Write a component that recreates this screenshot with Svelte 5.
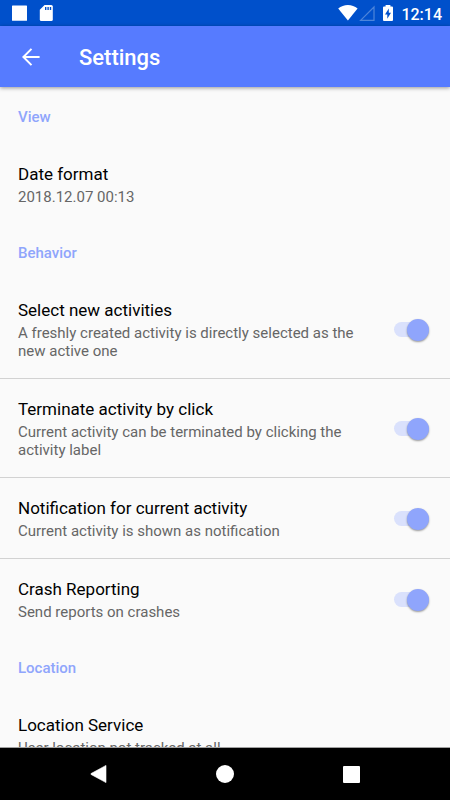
<script lang="ts">
	interface Item {
		id: string;
		title: string;
		summary: string;
		checked?: boolean;
	}

	interface Section {
		name: string;
		items: Item[];
	}

	let sections = $state<Section[]>([
		{
			name: "View",
			items: [
				{ id: "date-format", title: "Date format", summary: "2018.12.07 00:13" },
			],
		},
		{
			name: "Behavior",
			items: [
				{
					id: "select-new",
					title: "Select new activities",
					summary: "A freshly created activity is directly selected as the new active one",
					checked: true,
				},
				{
					id: "terminate",
					title: "Terminate activity by click",
					summary: "Current activity can be terminated by clicking the activity label",
					checked: true,
				},
				{
					id: "notification",
					title: "Notification for current activity",
					summary: "Current activity is shown as notification",
					checked: true,
				},
				{
					id: "crash",
					title: "Crash Reporting",
					summary: "Send reports on crashes",
					checked: true,
				},
			],
		},
		{
			name: "Location",
			items: [
				{
					id: "location-service",
					title: "Location Service",
					summary: "User location not tracked at all",
				},
			],
		},
	]);
</script>

{#snippet texts(item: Item)}
	<span class="texts">
		<span class="title">{item.title}</span>
		<span class="summary">{item.summary}</span>
	</span>
{/snippet}

<div class="screen">
	<div class="status">
		<svg width="42" height="18" viewBox="0 0 42 18" aria-hidden="true">
			<rect x="0" y="1.4" width="15" height="15.4" rx="0.6" fill="#fff" />
			<path
				d="M32.6 1H39.3Q40.8 1 40.8 2.5V15.5Q40.8 17 39.3 17H29.3Q27.8 17 27.8 15.5V5.8Z"
				fill="#fff"
			/>
			<path d="M33 3h1.4v3H33zM35.4 3h1.4v3h-1.4zM37.8 3h1.4v3h-1.4z" fill="#0050cb" />
		</svg>
		<div class="status-right">
			<svg width="56" height="18" viewBox="0 0 56 18" aria-hidden="true">
				<path d="M0.2 4.6Q4.4 1 9.9 1T19.6 4.6L9.9 16.6Z" fill="#fff" />
				<path d="M36 3V16.4H22.6Z" fill="none" stroke="#4d85da" stroke-width="1.2" />
				<path
					d="M47.6 2.4V1H52.4V2.4H54Q55 2.4 55 3.4V16Q55 17 54 17H46Q45 17 45 16V3.4Q45 2.4 46 2.4Z"
					fill="#fff"
				/>
				<path d="M50.8 4.6V8.8H53L49.3 14.8V10.5H47Z" fill="#0050cb" />
			</svg>
			<span class="clock">12:14</span>
		</div>
	</div>

	<header class="toolbar">
		<button class="back" aria-label="Navigate up">
			<svg width="18" height="18" viewBox="0 0 18 18" aria-hidden="true">
				<path d="M17.6 9H1.6M9.5 0.9L1.4 9L9.5 17.1" fill="none" stroke="#fff" stroke-width="2" />
			</svg>
		</button>
		<h1>Settings</h1>
	</header>

	<main class="list">
		{#each sections as section}
			<section>
				<h2>{section.name}</h2>
				{#each section.items as item (item.id)}
					{#if item.checked === undefined}
						<button class="row">{@render texts(item)}</button>
					{:else}
						<label class="row" for={item.id}>
							{@render texts(item)}
							<input id={item.id} class="switch" type="checkbox" role="switch" bind:checked={item.checked} />
						</label>
					{/if}
				{/each}
			</section>
		{/each}
	</main>

	<nav class="navbar">
		<button aria-label="Back">
			<svg width="18" height="20" viewBox="0 0 18 20" aria-hidden="true">
				<path d="M16 1.4V18.6L1 10.4Q0.4 10 1 9.6Z" fill="#fff" stroke="#fff" stroke-width="0.6" stroke-linejoin="round" />
			</svg>
		</button>
		<button aria-label="Home">
			<svg width="18" height="18" viewBox="0 0 18 18" aria-hidden="true">
				<circle cx="9" cy="9" r="9" fill="#fff" />
			</svg>
		</button>
		<button aria-label="Overview">
			<svg width="17" height="17" viewBox="0 0 17 17" aria-hidden="true">
				<rect width="17" height="17" rx="1" fill="#fff" />
			</svg>
		</button>
	</nav>
</div>

<style>
	:global(body) {
		margin: 0;
	}

	.screen {
		display: flex;
		flex-direction: column;
		height: 100vh;
		background: #fafafa;
		font-family: Roboto, sans-serif;
		color: #000;
	}

	button {
		margin: 0;
		padding: 0;
		border: none;
		background: none;
		font: inherit;
		color: inherit;
		text-align: left;
		cursor: pointer;
	}

	svg {
		display: block;
	}

	.status {
		display: flex;
		flex: none;
		align-items: center;
		justify-content: space-between;
		height: 26px;
		padding: 0 8px 0 12px;
		background: #0050cb;
	}

	.status-right {
		display: flex;
		align-items: center;
		gap: 7px;
	}

	.clock {
		font-size: 16px;
		font-weight: 500;
		line-height: 24px;
		color: #fff;
		padding-top: 3px;
	}

	.toolbar {
		display: flex;
		flex: none;
		align-items: center;
		gap: 39px;
		height: 61px;
		padding: 0 22px;
		background: #567bff;
		box-shadow: 0 1px 4px rgba(0, 0, 0, 0.4);
		z-index: 1;
	}

	h1 {
		margin: 0;
		padding-top: 2px;
		font-size: 22px;
		font-weight: 500;
		line-height: 26px;
		color: #fff;
	}

	.list {
		flex: 1;
		min-height: 0;
		padding-top: 1px;
		overflow-y: auto;
		scrollbar-width: none;
	}

	h2 {
		margin: 0;
		padding: 2px 18px 0;
		font-size: 15px;
		font-weight: 500;
		line-height: 54px;
		color: #8fa5fc;
	}

	.row {
		display: flex;
		box-sizing: border-box;
		align-items: center;
		justify-content: space-between;
		gap: 18px;
		width: 100%;
		padding: 19px 21px 18px 18px;
		cursor: pointer;
	}

	.row + .row {
		border-top: 1px solid #d2d2d2;
	}

	.texts {
		display: flex;
		flex-direction: column;
		gap: 3px;
	}

	.title {
		font-size: 17px;
		line-height: 22px;
	}

	.summary {
		font-size: 15px;
		line-height: 18px;
		color: #666;
	}

	.switch {
		display: flex;
		flex: none;
		align-items: center;
		appearance: none;
		width: 35px;
		height: 15px;
		margin: 0;
		border-radius: 8px;
		background: #c4c4c4;
		cursor: pointer;
	}

	.switch::before {
		content: "";
		width: 22px;
		height: 22px;
		border-radius: 50%;
		background: #f1f1f1;
		box-shadow: 0 1px 2px rgba(0, 0, 0, 0.4);
	}

	.switch:checked {
		justify-content: flex-end;
		background: #dae1fc;
	}

	.switch:checked::before {
		background: #8fa5fc;
	}

	.navbar {
		display: flex;
		flex: none;
		align-items: center;
		justify-content: center;
		height: 52px;
		border-top: 1px solid #a0a0a0;
		background: #000;
	}

	.navbar button {
		display: flex;
		flex: 0 1 126px;
		align-items: center;
		justify-content: center;
		height: 100%;
	}
</style>
